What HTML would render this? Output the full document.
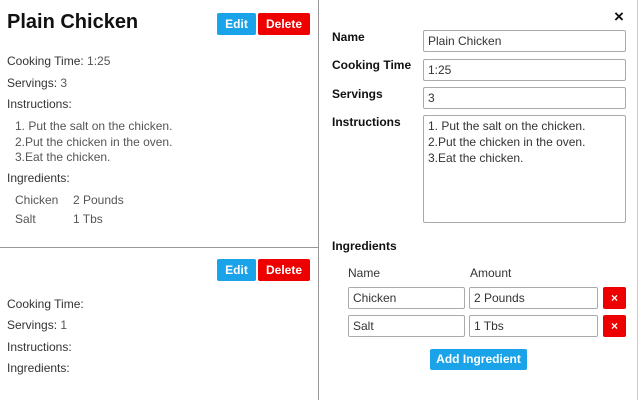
<!DOCTYPE html>
<html><head><style>
*{box-sizing:border-box;margin:0;padding:0}
body{width:640px;height:400px;overflow:hidden;background:#fff;font-family:"Liberation Sans",sans-serif;color:#222;position:relative}
.a{position:absolute;white-space:nowrap}
.t{font-size:12px;color:#333}
.g{color:#555}
.btn{position:absolute;color:#fff;font-weight:bold;font-size:12px;border-radius:2px;text-align:center}
.blue{background:#1aa3e8}.red{background:#ee0000}
.in{position:absolute;border:1px solid #aaa;border-radius:2px;font-size:12px;color:#333;padding:0 4px;line-height:20px}
.lb{position:absolute;font-weight:bold;font-size:12px;color:#111}
</style></head><body>
<div class="a" style="left:318px;top:0;width:1px;height:400px;background:#999"></div>
<div class="a" style="left:637px;top:0;width:1px;height:400px;background:#ccc"></div>
<div class="a" style="left:0;top:247px;width:318px;height:1px;background:#999"></div>

<div class="a" style="left:7px;top:11px;font-size:20px;font-weight:bold;color:#111">Plain Chicken</div>
<div class="btn blue" style="left:217px;top:13px;width:39px;height:22px;line-height:22px">Edit</div>
<div class="btn red" style="left:258px;top:13px;width:52px;height:22px;line-height:22px">Delete</div>
<div class="a t" style="left:7px;top:54px">Cooking Time: <span class="g">1:25</span></div>
<div class="a t" style="left:7px;top:76px">Servings: <span class="g">3</span></div>
<div class="a t" style="left:7px;top:97px">Instructions:</div>
<div class="a t g" style="left:15px;top:119px;line-height:15.5px">1. Put the salt on the chicken.<br>2.Put the chicken in the oven.<br>3.Eat the chicken.</div>
<div class="a t" style="left:7px;top:171px">Ingredients:</div>
<div class="a t g" style="left:15px;top:191px;line-height:19px">Chicken<br>Salt</div>
<div class="a t g" style="left:73px;top:191px;line-height:19px">2 Pounds<br>1 Tbs</div>

<div class="btn blue" style="left:217px;top:259px;width:39px;height:22px;line-height:22px">Edit</div>
<div class="btn red" style="left:258px;top:259px;width:52px;height:22px;line-height:22px">Delete</div>
<div class="a t" style="left:7px;top:297px">Cooking Time:</div>
<div class="a t" style="left:7px;top:318px">Servings: <span class="g">1</span></div>
<div class="a t" style="left:7px;top:340px">Instructions:</div>
<div class="a t" style="left:7px;top:361px">Ingredients:</div>

<div class="a" style="left:614px;top:7px;font-size:17px;font-weight:bold;color:#111">×</div>
<div class="lb" style="left:332px;top:30px">Name</div>
<div class="lb" style="left:332px;top:58px">Cooking Time</div>
<div class="lb" style="left:332px;top:87px">Servings</div>
<div class="lb" style="left:332px;top:115px">Instructions</div>
<div class="in" style="left:423px;top:30px;width:203px;height:22px">Plain Chicken</div>
<div class="in" style="left:423px;top:59px;width:203px;height:22px">1:25</div>
<div class="in" style="left:423px;top:87px;width:203px;height:22px">3</div>
<div class="in" style="left:423px;top:115px;width:203px;height:108px;line-height:16px;padding-top:2px">1. Put the salt on the chicken.<br>2.Put the chicken in the oven.<br>3.Eat the chicken.</div>
<div class="lb" style="left:332px;top:239px">Ingredients</div>
<div class="a t" style="left:348px;top:266px">Name</div>
<div class="a t" style="left:470px;top:266px">Amount</div>
<div class="in" style="left:348px;top:287px;width:117px;height:22px">Chicken</div>
<div class="in" style="left:469px;top:287px;width:129px;height:22px">2 Pounds</div>
<div class="btn red" style="left:603px;top:287px;width:23px;height:22px;line-height:22px;font-size:12px">×</div>
<div class="in" style="left:348px;top:315px;width:117px;height:22px">Salt</div>
<div class="in" style="left:469px;top:315px;width:129px;height:22px">1 Tbs</div>
<div class="btn red" style="left:603px;top:315px;width:23px;height:22px;line-height:22px;font-size:12px">×</div>
<div class="btn blue" style="left:430px;top:349px;width:97px;height:21px;line-height:21px">Add Ingredient</div>
</body></html>
